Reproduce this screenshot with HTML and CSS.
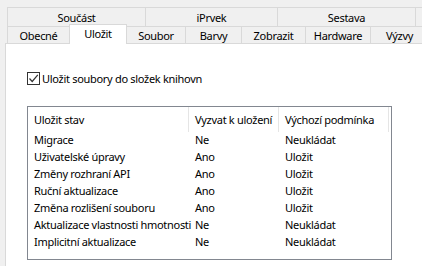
FILE: index.html
```html
<!DOCTYPE html>
<html>
<head>
<meta charset="utf-8">
<link rel="stylesheet" href="styles.css">
</head>
<body>
<div class="tabs">
  <div class="tabrow top">
    <div class="tab w1">Součást</div>
    <div class="tab w2">iPrvek</div>
    <div class="tab w3">Sestava</div>
    <div class="tab grow"></div>
  </div>
  <div class="tabrow bottom">
    <div class="tab t1">Obecné</div>
    <div class="tab t2 active">Uložit</div>
    <div class="tab t3">Soubor</div>
    <div class="tab t4">Barvy</div>
    <div class="tab t5">Zobrazit</div>
    <div class="tab t6">Hardware</div>
    <div class="tab grow t7">Výzvy</div>
  </div>
</div>
<div class="panel">
  <label class="check">
    <span class="box"><svg width="11" height="11" viewBox="0 0 11 11"><path d="M1.5 5.5 L4.2 8.5 L9.8 1.8" fill="none" stroke="#333" stroke-width="1.2"/></svg></span>
    <span>Uložit soubory do složek knihovn</span>
  </label>
  <div class="list">
    <div class="head">
      <div class="hc">Uložit stav</div>
      <div class="hc">Vyzvat k uložení</div>
      <div class="hc">Výchozí podmínka</div>
      <div class="hc last"></div>
    </div>
    <div class="rows">
      <div class="row"><span>Migrace</span><span>Ne</span><span>Neukládat</span></div>
      <div class="row"><span>Uživatelské úpravy</span><span>Ano</span><span>Uložit</span></div>
      <div class="row"><span>Změny rozhraní API</span><span>Ano</span><span>Uložit</span></div>
      <div class="row"><span>Ruční aktualizace</span><span>Ano</span><span>Uložit</span></div>
      <div class="row"><span>Změna rozlišení souboru</span><span>Ano</span><span>Uložit</span></div>
      <div class="row"><span>Aktualizace vlastnosti hmotnosti</span><span>Ne</span><span>Neukládat</span></div>
      <div class="row"><span>Implicitní aktualizace</span><span>Ne</span><span>Neukládat</span></div>
    </div>
  </div>
</div>
</body>
</html>
```
FILE: styles.css
```css
html, body {
  margin: 0;
  padding: 0;
  background: #f0f0f0;
  font-family: "Noto Sans", "Open Sans", sans-serif;
  font-size: 11px;
  letter-spacing: -0.3px;
  color: #000;
  overflow: hidden;
}
.tabs {
  padding: 7px 0 0 7px;
  position: relative;
  z-index: 2;
}
.tabrow {
  display: flex;
}
.tab {
  box-sizing: border-box;
  border: 1px solid #d9d9d9;
  border-right: none;
  background: #f0f0f0;
  display: flex;
  align-items: center;
  justify-content: center;
  white-space: nowrap;
  line-height: 1;
  padding-top: 1px;
}
.top .tab { height: 19px; border-bottom: none; }
.bottom .tab { height: 17px; border-bottom: none; }
.w1 { width: 138px; }
.w2 { width: 132px; }
.w3 { width: 138px; }
.grow { flex: 1; }
.t1 { width: 62px; }
.t2 { width: 58px; }
.t3 { width: 58px; }
.t4 { width: 56px; }
.t5 { width: 64px; }
.t6 { width: 65px; }
.t7 { justify-content: flex-start; padding-left: 15px; }
.bottom .tab.active {
  background: #fff;
  height: 20px;
  margin-top: -2px;
  margin-bottom: -1px;
  border-right: 1px solid #d9d9d9;
  padding: 0 0 3px;
}
.bottom .tab.active + .tab { border-left: none; }
.panel {
  margin-left: 5px;
  background: #fff;
  border-left: 1px solid #d9d9d9;
  border-top: 1px solid #d9d9d9;
  height: 224px;
  padding: 28px 0 0 21px;
  box-sizing: border-box;
}
.check {
  display: flex;
  align-items: center;
  gap: 2px;
  height: 13px;
}
.box {
  box-sizing: border-box;
  width: 13px;
  height: 13px;
  border: 1px solid #333;
  background: #fff;
  display: flex;
  align-items: center;
  justify-content: center;
}
.box svg { display: block; }
.list {
  margin-top: 21px;
  box-sizing: border-box;
  width: 365px;
  height: 154px;
  border: 1px solid #828790;
  background: #fff;
}
.head {
  display: grid;
  grid-template-columns: 161px 90px 110px 1fr;
  height: 25px;
}
.hc {
  box-sizing: border-box;
  border-right: 1px solid #e5e5e5;
  padding-left: 6px;
  display: flex;
  align-items: center;
  white-space: nowrap;
}
.hc.last { border-right: none; }
.rows { margin-top: -1px; }
.row {
  display: grid;
  grid-template-columns: 161px 90px 110px;
  height: 17px;
  align-items: center;
  white-space: nowrap;
}
.row span { padding-left: 6px; }
```
